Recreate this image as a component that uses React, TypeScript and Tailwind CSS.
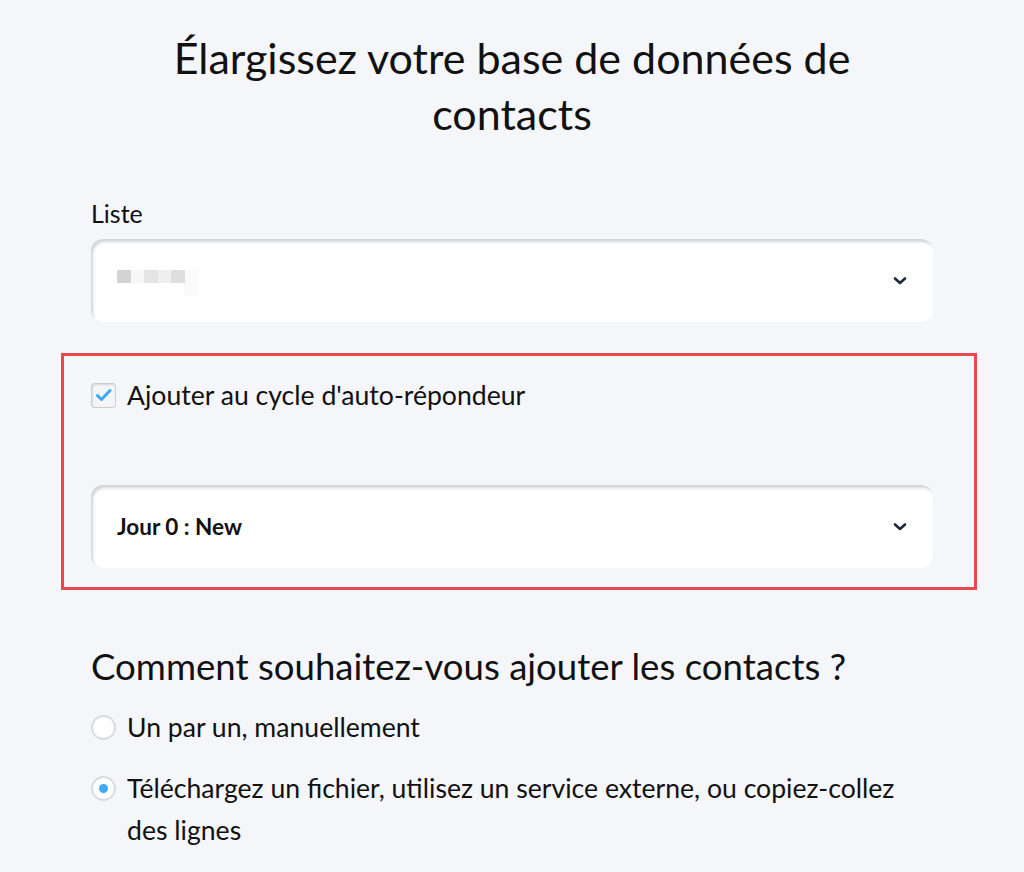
import React from "react";

function Chevron() {
  return (
    <svg width="14" height="10" viewBox="0 0 14 10" fill="none" className="shrink-0">
      <path d="M2 2.5l5 4.5 5-4.5" stroke="#1f2933" strokeWidth="2.6" strokeLinecap="round" strokeLinejoin="round" />
    </svg>
  );
}

function SelectBox({ children }: { children: React.ReactNode }) {
  return (
    <div className="flex h-[83px] items-center justify-between rounded-[12px] bg-white pl-[26px] pr-[26px] shadow-[inset_2px_3px_3px_rgba(120,135,150,0.35)]">
      <div>{children}</div>
      <Chevron />
    </div>
  );
}

const blurRow1 = ["#d3d3d3", "#f7f7f7", "#e4e4e4", "#efefef", "#dedede", "#fafafa"];

export default function App() {
  return (
    <div className="min-h-[872px] bg-[#f5f6fa] font-['Lato',sans-serif] text-[#111]">
      <div className="mx-auto w-[842px] pt-[30px]">
        <h1 className="text-center text-[43px] leading-[56px] text-[#111]">
          Élargissez votre base de données de
          <br />
          contacts
        </h1>

        <label className="mt-[56px] block text-[25px] leading-[30px]">Liste</label>
        <div className="mt-[11px]">
          <SelectBox>
            <div className="flex flex-col pt-[4px]">
              <div className="flex">
                {blurRow1.map((c, i) => (
                  <div key={i} className="h-[13px] w-[13.5px]" style={{ background: c }} />
                ))}
              </div>
              <div className="flex pl-[67px]">
                <div className="h-[13px] w-[13.5px] bg-[#fafafa]" />
              </div>
            </div>
          </SelectBox>
        </div>

        <div className="-ml-[30px] -mr-[44px] mt-[31px] border-[3px] border-[#e8484f] pb-[19px] pl-[27px] pr-[41px] pt-[23px]">
          <label className="flex items-center gap-[11px] text-[26.6px] leading-[32px]">
            <span className="flex h-[25px] w-[25px] shrink-0 items-center justify-center rounded-[3px] border border-[#c9ced3] bg-[#f3f5f7] shadow-[inset_1px_1px_2px_rgba(0,0,0,0.12)]">
              <svg width="17" height="14" viewBox="0 0 17 14" fill="none">
                <path d="M2.5 7.5l4 4 8.5-9" stroke="#3fa9f5" strokeWidth="3" strokeLinecap="round" strokeLinejoin="round" />
              </svg>
            </span>
            Ajouter au cycle d'auto-répondeur
          </label>
          <div className="mt-[74px]">
            <SelectBox>
              <span className="text-[22.5px] font-bold">Jour 0 : New</span>
            </SelectBox>
          </div>
        </div>

        <h2 className="mt-[54px] text-[36.6px] leading-[44px]">Comment souhaitez-vous ajouter les contacts ?</h2>

        <div className="mt-[18px] flex flex-col gap-[19px] text-[26.6px] leading-[42px]">
          <label className="flex items-start gap-[11px]">
            <span className="mt-[9px] h-[25px] w-[25px] shrink-0 rounded-full border-2 border-[#d9dbde] bg-white" />
            <span>Un par un, manuellement</span>
          </label>
          <label className="flex items-start gap-[11px]">
            <span className="mt-[9px] flex h-[25px] w-[25px] shrink-0 items-center justify-center rounded-full border-2 border-[#d9dbde] bg-white">
              <span className="h-[9px] w-[9px] rounded-full bg-[#3fa9f5]" />
            </span>
            <span>Téléchargez un fichier, utilisez un service externe, ou copiez-collez des lignes</span>
          </label>
        </div>
      </div>
    </div>
  );
}
